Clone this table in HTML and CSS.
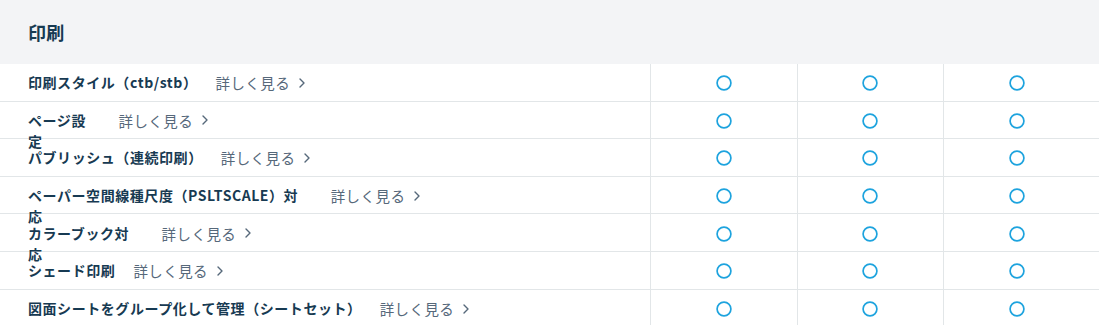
FILE: index.html
```html
<!DOCTYPE html>
<html lang="ja">
<head>
<meta charset="utf-8">
<title>印刷</title>
<link rel="stylesheet" href="styles.css">
</head>
<body>
<section class="compare">
  <header class="compare__head">
    <h2 class="compare__title">印刷</h2>
  </header>
  <div class="compare__body">
    <div class="row">
      <div class="cell cell--name"><span class="title">印刷スタイル（ctb/stb）</span><a class="more" href="#">詳しく見る<svg class="chev" viewBox="0 0 6 10" width="6" height="10"><path d="M1 1l4 4-4 4"/></svg></a></div>
      <div class="cell cell--mark"><svg class="mark" viewBox="0 0 16 16" width="16" height="16"><circle cx="8" cy="8" r="6.9"/></svg></div>
      <div class="cell cell--mark"><svg class="mark" viewBox="0 0 16 16" width="16" height="16"><circle cx="8" cy="8" r="6.9"/></svg></div>
      <div class="cell cell--mark"><svg class="mark" viewBox="0 0 16 16" width="16" height="16"><circle cx="8" cy="8" r="6.9"/></svg></div>
      <div class="cell cell--rest"></div>
    </div>
    <div class="row">
      <div class="cell cell--name"><span class="title title--wrap">ページ設<br>定</span><a class="more" href="#">詳しく見る<svg class="chev" viewBox="0 0 6 10" width="6" height="10"><path d="M1 1l4 4-4 4"/></svg></a></div>
      <div class="cell cell--mark"><svg class="mark" viewBox="0 0 16 16" width="16" height="16"><circle cx="8" cy="8" r="6.9"/></svg></div>
      <div class="cell cell--mark"><svg class="mark" viewBox="0 0 16 16" width="16" height="16"><circle cx="8" cy="8" r="6.9"/></svg></div>
      <div class="cell cell--mark"><svg class="mark" viewBox="0 0 16 16" width="16" height="16"><circle cx="8" cy="8" r="6.9"/></svg></div>
      <div class="cell cell--rest"></div>
    </div>
    <div class="row">
      <div class="cell cell--name"><span class="title">パブリッシュ（連続印刷）</span><a class="more" href="#">詳しく見る<svg class="chev" viewBox="0 0 6 10" width="6" height="10"><path d="M1 1l4 4-4 4"/></svg></a></div>
      <div class="cell cell--mark"><svg class="mark" viewBox="0 0 16 16" width="16" height="16"><circle cx="8" cy="8" r="6.9"/></svg></div>
      <div class="cell cell--mark"><svg class="mark" viewBox="0 0 16 16" width="16" height="16"><circle cx="8" cy="8" r="6.9"/></svg></div>
      <div class="cell cell--mark"><svg class="mark" viewBox="0 0 16 16" width="16" height="16"><circle cx="8" cy="8" r="6.9"/></svg></div>
      <div class="cell cell--rest"></div>
    </div>
    <div class="row">
      <div class="cell cell--name"><span class="title title--wrap">ペーパー空間線種尺度（PSLTSCALE）対<br>応</span><a class="more" href="#">詳しく見る<svg class="chev" viewBox="0 0 6 10" width="6" height="10"><path d="M1 1l4 4-4 4"/></svg></a></div>
      <div class="cell cell--mark"><svg class="mark" viewBox="0 0 16 16" width="16" height="16"><circle cx="8" cy="8" r="6.9"/></svg></div>
      <div class="cell cell--mark"><svg class="mark" viewBox="0 0 16 16" width="16" height="16"><circle cx="8" cy="8" r="6.9"/></svg></div>
      <div class="cell cell--mark"><svg class="mark" viewBox="0 0 16 16" width="16" height="16"><circle cx="8" cy="8" r="6.9"/></svg></div>
      <div class="cell cell--rest"></div>
    </div>
    <div class="row">
      <div class="cell cell--name"><span class="title title--wrap">カラーブック対<br>応</span><a class="more" href="#">詳しく見る<svg class="chev" viewBox="0 0 6 10" width="6" height="10"><path d="M1 1l4 4-4 4"/></svg></a></div>
      <div class="cell cell--mark"><svg class="mark" viewBox="0 0 16 16" width="16" height="16"><circle cx="8" cy="8" r="6.9"/></svg></div>
      <div class="cell cell--mark"><svg class="mark" viewBox="0 0 16 16" width="16" height="16"><circle cx="8" cy="8" r="6.9"/></svg></div>
      <div class="cell cell--mark"><svg class="mark" viewBox="0 0 16 16" width="16" height="16"><circle cx="8" cy="8" r="6.9"/></svg></div>
      <div class="cell cell--rest"></div>
    </div>
    <div class="row">
      <div class="cell cell--name"><span class="title">シェード印刷</span><a class="more" href="#">詳しく見る<svg class="chev" viewBox="0 0 6 10" width="6" height="10"><path d="M1 1l4 4-4 4"/></svg></a></div>
      <div class="cell cell--mark"><svg class="mark" viewBox="0 0 16 16" width="16" height="16"><circle cx="8" cy="8" r="6.9"/></svg></div>
      <div class="cell cell--mark"><svg class="mark" viewBox="0 0 16 16" width="16" height="16"><circle cx="8" cy="8" r="6.9"/></svg></div>
      <div class="cell cell--mark"><svg class="mark" viewBox="0 0 16 16" width="16" height="16"><circle cx="8" cy="8" r="6.9"/></svg></div>
      <div class="cell cell--rest"></div>
    </div>
    <div class="row">
      <div class="cell cell--name"><span class="title">図面シートをグループ化して管理（シートセット）</span><a class="more" href="#">詳しく見る<svg class="chev" viewBox="0 0 6 10" width="6" height="10"><path d="M1 1l4 4-4 4"/></svg></a></div>
      <div class="cell cell--mark"><svg class="mark" viewBox="0 0 16 16" width="16" height="16"><circle cx="8" cy="8" r="6.9"/></svg></div>
      <div class="cell cell--mark"><svg class="mark" viewBox="0 0 16 16" width="16" height="16"><circle cx="8" cy="8" r="6.9"/></svg></div>
      <div class="cell cell--mark"><svg class="mark" viewBox="0 0 16 16" width="16" height="16"><circle cx="8" cy="8" r="6.9"/></svg></div>
      <div class="cell cell--rest"></div>
    </div>
  </div>
</section>
</body>
</html>
```
FILE: styles.css
```css
html, body {
  margin: 0;
  padding: 0;
  background: #ffffff;
}

body {
  font-family: "Noto Sans CJK JP", "Noto Sans", sans-serif;
  color: #173a52;
  overflow: hidden;
}

.compare__head {
  background: #f3f4f6;
  height: 64px;
  display: flex;
  align-items: center;
  padding-left: 28px;
}

.compare__title {
  margin: 0;
  font-size: 18px;
  font-weight: 700;
  line-height: 1;
  letter-spacing: 0.02em;
  color: #173a52;
}

.row {
  display: grid;
  grid-template-columns: 650px 146.5px 146.5px 146.5px 1fr;
  height: 37.6px;
  box-sizing: border-box;
  border-bottom: 1px solid #e2e6e8;
}

.row:last-child {
  border-bottom: 0;
}

.cell {
  display: flex;
  align-items: center;
  min-width: 0;
}

.cell--name {
  padding-left: 28px;
  gap: 18px;
}

.cell--mark {
  justify-content: center;
  border-left: 1px solid #e2e6e8;
  padding-top: 2px;
  box-sizing: border-box;
}

.title {
  display: block;
  height: 21px;
  line-height: 21px;
  font-size: 14px;
  font-weight: 700;
  letter-spacing: 0.04em;
  color: #173a52;
  white-space: nowrap;
  padding-top: 1px;
}

.title--wrap {
  padding-right: 14.5px;
}

.more {
  display: flex;
  align-items: center;
  gap: 9px;
  font-size: 14.5px;
  letter-spacing: 0.03em;
  line-height: 21px;
  color: #56687a;
  text-decoration: none;
  white-space: nowrap;
  padding-top: 1px;
}

.chev {
  width: 6px;
  height: 10px;
  fill: none;
  stroke: #56687a;
  stroke-width: 1.4;
  stroke-linecap: round;
  stroke-linejoin: round;
}

.mark {
  width: 16px;
  height: 16px;
  fill: none;
  stroke: #1da3de;
  stroke-width: 1.7;
}
```
